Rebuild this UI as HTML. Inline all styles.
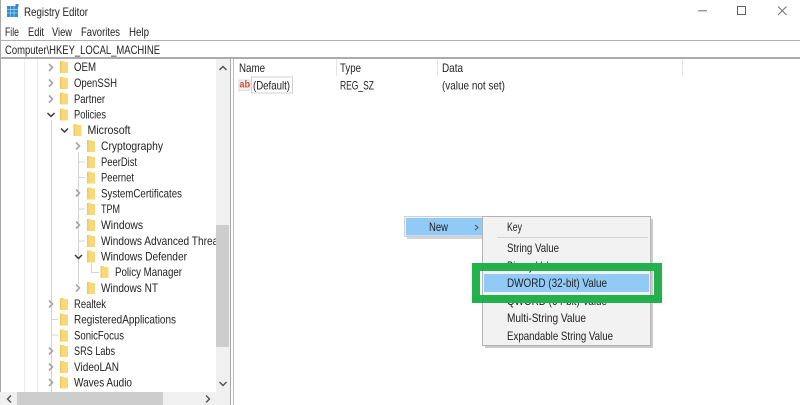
<!DOCTYPE html>
<html><head><meta charset="utf-8"><style>
html,body{margin:0;padding:0;background:#fff;width:800px;height:405px;overflow:hidden}
svg{display:block}
text{font-family:"Liberation Sans",sans-serif;font-size:12px;fill:#222}
</style></head><body>
<svg xmlns="http://www.w3.org/2000/svg" width="800" height="405" viewBox="0 0 800 405">
<defs>
<clipPath id="tree"><rect x="0" y="59" width="216" height="333"/></clipPath>
<g id="f"><path d="M0 0h3.500l1 1h3.500v11h-8z" fill="#f9d878"/><rect x="0" y="0" width="1.500" height="12" fill="#f2c85c"/></g>
<path id="cr" d="M0 0l3.500 3.500l-3.500 3.500" fill="none" stroke="#a4a4a4" stroke-width="1.600"/>
<path id="cd" d="M0 0l3.500 3.500l3.500-3.500" fill="none" stroke="#383838" stroke-width="1.500"/>
</defs>
<rect width="800" height="405" fill="#fff"/>
<rect x="0" y="0" width="1" height="405" fill="#a8a8a8"/>

<!-- title icon -->
<rect x="7" y="6" width="11" height="11" fill="#2a8fd0"/>
<path d="M7 9.500h11M7 13h11M10.500 6v11M14 6v11" stroke="#a8d8f0" stroke-width=".7"/>
<rect x="15.500" y="4" width="3" height="3" fill="#2a8fd0"/>
<text x="24" y="16" textLength="64" lengthAdjust="spacingAndGlyphs">Registry Editor</text>
<!-- window buttons -->
<rect x="698" y="10" width="9" height="1.400" fill="#9a9a9a"/>
<rect x="737.500" y="6.500" width="8" height="8" fill="none" stroke="#606060"/>
<path d="M778 6.500l8.500 8.500M786.500 6.500l-8.500 8.500" stroke="#707070" stroke-width="1"/>
<!-- menu -->
<text x="5" y="36" textLength="14" lengthAdjust="spacingAndGlyphs">File</text>
<text x="28" y="36" textLength="16" lengthAdjust="spacingAndGlyphs">Edit</text>
<text x="52" y="36" textLength="20" lengthAdjust="spacingAndGlyphs">View</text>
<text x="81" y="36" textLength="39" lengthAdjust="spacingAndGlyphs">Favorites</text>
<text x="129" y="36" textLength="20" lengthAdjust="spacingAndGlyphs">Help</text>
<!-- address -->
<rect x="0" y="40" width="800" height="1" fill="#b0b0b0"/>
<text x="5" y="54" textLength="155" lengthAdjust="spacingAndGlyphs">Computer\HKEY_LOCAL_MACHINE</text>
<rect x="0" y="57" width="800" height="2" fill="#acacac"/>

<!-- tree guides -->
<path d="M24.500 59V392M37.500 59V392" stroke="#ececec" stroke-width="1" fill="none"/>
<path d="M51.500 120V392M51.500 319.500H58M51.500 335H58M78.500 152V284M78.500 162H85M78.500 177.500H85M78.500 209H85M78.500 241H85M91.500 263V272.500H99" stroke="#d4d4d4" stroke-width="1" fill="none"/>

<!-- tree chevrons -->
<use href="#cr" x="49" y="64"/><use href="#cr" x="49" y="79.500"/><use href="#cr" x="49" y="95.500"/>
<use href="#cd" x="47.500" y="113"/><use href="#cd" x="61" y="128.500"/>
<use href="#cr" x="76" y="142.500"/><use href="#cr" x="76" y="189.500"/><use href="#cr" x="76" y="221.500"/>
<use href="#cd" x="75" y="255"/><use href="#cr" x="76" y="284.500"/>
<use href="#cr" x="49" y="300.500"/><use href="#cr" x="49" y="347.500"/><use href="#cr" x="49" y="363.500"/><use href="#cr" x="49" y="379"/>

<!-- folders -->
<use href="#f" x="60" y="61"/><use href="#f" x="60" y="77"/><use href="#f" x="60" y="92.500"/><use href="#f" x="60" y="108.500"/>
<use href="#f" x="73.500" y="124"/>
<use href="#f" x="87" y="140"/><use href="#f" x="87" y="156"/><use href="#f" x="87" y="171.500"/><use href="#f" x="87" y="187.500"/><use href="#f" x="87" y="203"/><use href="#f" x="87" y="219"/><use href="#f" x="87" y="235"/><use href="#f" x="87" y="250.500"/>
<use href="#f" x="100.500" y="266"/>
<use href="#f" x="87" y="282"/>
<use href="#f" x="60" y="298"/><use href="#f" x="60" y="313.500"/><use href="#f" x="60" y="329.500"/><use href="#f" x="60" y="345"/><use href="#f" x="60" y="361"/><use href="#f" x="60" y="376.500"/>

<!-- tree labels -->
<g clip-path="url(#tree)">
<text x="74" y="71" textLength="22" lengthAdjust="spacingAndGlyphs">OEM</text>
<text x="74" y="87" textLength="43" lengthAdjust="spacingAndGlyphs">OpenSSH</text>
<text x="74" y="103" textLength="31" lengthAdjust="spacingAndGlyphs">Partner</text>
<text x="74" y="118.500" textLength="32" lengthAdjust="spacingAndGlyphs">Policies</text>
<text x="87.500" y="134" textLength="43" lengthAdjust="spacingAndGlyphs">Microsoft</text>
<text x="101" y="150" textLength="62" lengthAdjust="spacingAndGlyphs">Cryptography</text>
<text x="101" y="166" textLength="36" lengthAdjust="spacingAndGlyphs">PeerDist</text>
<text x="101" y="181.500" textLength="33" lengthAdjust="spacingAndGlyphs">Peernet</text>
<text x="101" y="197.500" textLength="81" lengthAdjust="spacingAndGlyphs">SystemCertificates</text>
<text x="101" y="213" textLength="19" lengthAdjust="spacingAndGlyphs">TPM</text>
<text x="101" y="229" textLength="42" lengthAdjust="spacingAndGlyphs">Windows</text>
<text x="101" y="245" textLength="120" lengthAdjust="spacingAndGlyphs">Windows Advanced Threat</text>
<text x="101" y="260.500" textLength="86" lengthAdjust="spacingAndGlyphs">Windows Defender</text>
<text x="115" y="276" textLength="67" lengthAdjust="spacingAndGlyphs">Policy Manager</text>
<text x="101" y="292" textLength="57" lengthAdjust="spacingAndGlyphs">Windows NT</text>
<text x="74" y="308" textLength="32" lengthAdjust="spacingAndGlyphs">Realtek</text>
<text x="74" y="323.500" textLength="102" lengthAdjust="spacingAndGlyphs">RegisteredApplications</text>
<text x="74" y="339.500" textLength="50" lengthAdjust="spacingAndGlyphs">SonicFocus</text>
<text x="74" y="355" textLength="41" lengthAdjust="spacingAndGlyphs">SRS Labs</text>
<text x="74" y="371" textLength="45" lengthAdjust="spacingAndGlyphs">VideoLAN</text>
<text x="74" y="386.500" textLength="58" lengthAdjust="spacingAndGlyphs">Waves Audio</text>
</g>

<!-- vertical scrollbar -->
<rect x="216" y="59" width="14" height="333" fill="#f0f0f0"/>
<rect x="216" y="225" width="13" height="122" fill="#cdcdcd"/>
<path d="M219.500 70l3.500-3.500l3.500 3.500" fill="none" stroke="#505050" stroke-width="1.400"/>
<path d="M219.500 382l3.500 3.500l3.500-3.500" fill="none" stroke="#505050" stroke-width="1.400"/>
<!-- horizontal scrollbar -->
<rect x="0" y="392" width="230" height="13" fill="#f0f0f0"/>
<rect x="17" y="392" width="146" height="13" fill="#cdcdcd"/>
<path d="M11 395.500l-3.500 3.500l3.500 3.500" fill="none" stroke="#505050" stroke-width="1.400"/>
<path d="M206 395.500l3.500 3.500l-3.500 3.500" fill="none" stroke="#505050" stroke-width="1.400"/>

<!-- splitter -->
<rect x="230" y="59" width="1" height="346" fill="#a8a8a8"/>
<rect x="233" y="59" width="1" height="346" fill="#b8b8b8"/>

<!-- list header -->
<path d="M336.500 59V76M437.500 59V76M682.500 59V76" stroke="#e5e5e5"/>
<text x="239" y="72" textLength="26" lengthAdjust="spacingAndGlyphs">Name</text>
<text x="340" y="72" textLength="21" lengthAdjust="spacingAndGlyphs">Type</text>
<text x="442" y="72" textLength="21" lengthAdjust="spacingAndGlyphs">Data</text>
<!-- value row -->
<path d="M239 80h11v9.500c-3 2-6-1-11 1.500z" fill="#f6f6f6" stroke="#cfcfcf" stroke-width=".8"/>
<text x="239.500" y="87.500" style="font-size:10px;font-weight:bold;fill:#dd4a2c" textLength="10.500" lengthAdjust="spacingAndGlyphs">ab</text>
<rect x="251.500" y="77" width="41" height="16" fill="#fff" stroke="#d0d0d0"/>
<text x="253" y="89.500" textLength="37" lengthAdjust="spacingAndGlyphs">(Default)</text>
<text x="340" y="89.500" textLength="34" lengthAdjust="spacingAndGlyphs">REG_SZ</text>
<text x="442" y="89.500" textLength="63" lengthAdjust="spacingAndGlyphs">(value not set)</text>

<!-- context menu -->
<rect x="407" y="219" width="78" height="20" fill="#b8b8b8" opacity=".6"/>
<rect x="404.500" y="216.500" width="78" height="20" fill="#f2f2f2" stroke="#d0d0d0"/>
<rect x="406" y="218" width="77" height="17.500" fill="#91c9f7"/>
<text x="429" y="231" textLength="19" lengthAdjust="spacingAndGlyphs">New</text>
<path d="M475 225l3 2.500l-3 2.500" fill="none" stroke="#505050" stroke-width="1"/>

<!-- submenu -->
<rect x="485" y="219" width="168" height="129" fill="#a0a0a0" opacity=".55"/>
<rect x="482.500" y="216.500" width="168" height="129" fill="#f2f2f2" stroke="#b4b4b4"/>
<text x="507" y="231" textLength="15" lengthAdjust="spacingAndGlyphs">Key</text>
<rect x="497" y="237" width="151" height="1" fill="#d2d2d2"/>
<text x="507" y="252" textLength="52" lengthAdjust="spacingAndGlyphs">String Value</text>
<text x="507" y="270" textLength="52" lengthAdjust="spacingAndGlyphs">Binary Value</text>
<rect x="484" y="274" width="165" height="18" fill="#91c9f7"/>
<text x="507" y="287" textLength="100" lengthAdjust="spacingAndGlyphs">DWORD (32-bit) Value</text>
<text x="507" y="305" textLength="100" lengthAdjust="spacingAndGlyphs">QWORD (64-bit) Value</text>
<text x="507" y="322" textLength="79" lengthAdjust="spacingAndGlyphs">Multi-String Value</text>
<text x="507" y="340" textLength="106" lengthAdjust="spacingAndGlyphs">Expandable String Value</text>

<!-- green annotation -->
<rect x="476" y="267" width="182" height="32" fill="none" stroke="#22b14c" stroke-width="8"/>
</svg>
</body></html>
